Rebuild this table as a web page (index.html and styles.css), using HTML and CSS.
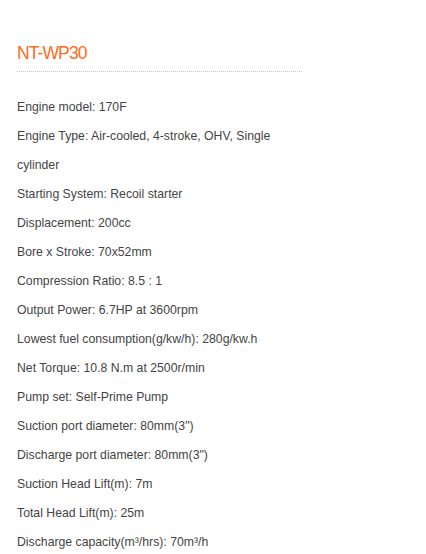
FILE: index.html
```html
<!DOCTYPE html>
<html>
<head>
<meta charset="utf-8">
<link rel="stylesheet" href="styles.css">
</head>
<body>
<div class="product">
  <h1 class="title">NT-WP30</h1>
  <div class="specs">
    <p>Engine model: 170F</p>
    <p>Engine Type: Air-cooled, 4-stroke, OHV, Single cylinder</p>
    <p>Starting System: Recoil starter</p>
    <p>Displacement: 200cc</p>
    <p>Bore x Stroke: 70x52mm</p>
    <p>Compression Ratio: 8.5 : 1</p>
    <p>Output Power: 6.7HP at 3600rpm</p>
    <p>Lowest fuel consumption(g/kw/h): 280g/kw.h</p>
    <p>Net Torque: 10.8 N.m at 2500r/min</p>
    <p>Pump set: Self-Prime Pump</p>
    <p>Suction port diameter: 80mm(3")</p>
    <p>Discharge port diameter: 80mm(3")</p>
    <p>Suction Head Lift(m): 7m</p>
    <p>Total Head Lift(m): 25m</p>
    <p>Discharge capacity(m³/hrs): 70m³/h</p>
  </div>
</div>
</body>
</html>
```
FILE: styles.css
```css
html, body {
  margin: 0;
  padding: 0;
  background: #fff;
}
.product {
  width: 285px;
  padding: 40px 0 0 17px;
  font-family: "Liberation Sans", Arial, sans-serif;
}
.title {
  margin: 0;
  font-size: 17.5px;
  font-weight: normal;
  letter-spacing: -0.9px;
  line-height: 26px;
  color: #ff6a1c;
  padding-bottom: 5px;
  border-bottom: 1px dotted #c8c8c8;
}
.specs {
  padding-top: 21px;
}
.specs p {
  margin: 0;
  font-size: 12.25px;
  line-height: 29px;
  color: #444;
}
```
